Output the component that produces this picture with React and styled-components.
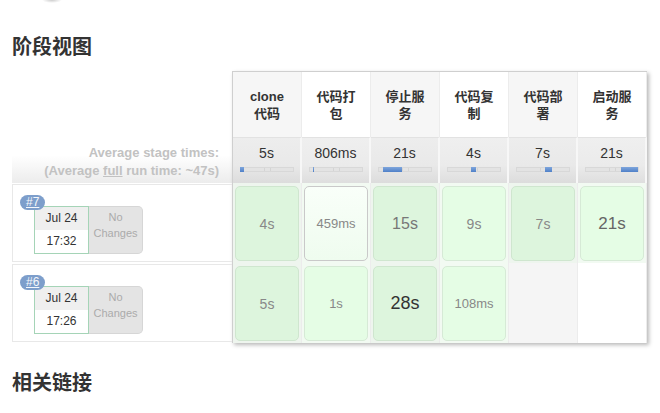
import React from 'react';
import styled, { createGlobalStyle } from 'styled-components';

const GlobalStyle = createGlobalStyle`
  html, body {
    margin: 0;
    background: #fff;
  }
  body {
    font-family: "Liberation Sans", Arial, "Noto Sans CJK SC", sans-serif;
    color: #333;
    overflow: hidden;
  }
`;

const Page = styled.div`
  padding: 0 12px;
`;

const TopShade = styled.div`
  width: 20px;
  height: 3px;
  margin-left: 30px;
  background: radial-gradient(ellipse at top, rgba(0, 0, 0, 0.2), rgba(0, 0, 0, 0) 70%);
`;

const Heading = styled.h2`
  margin: ${props => props.top}px 0 0;
  font-family: "Noto Sans CJK SC", sans-serif;
  font-size: 20px;
  line-height: 24px;
  font-weight: bold;
  color: #333;
`;

const StageView = styled.div`
  display: flex;
  margin-top: 13px;
`;

const LeftCol = styled.div`
  width: 220px;
  display: grid;
  grid-template-rows: 66px 46px 80px 80px;
`;

const LeftAvg = styled.div`
  margin-top: 3px;
  padding-right: 13px;
  background: linear-gradient(#fff, #fff 35%, #ececec);
  display: flex;
  flex-direction: column;
  justify-content: center;
  align-items: flex-end;
  font-size: 13px;
  line-height: 18px;
  font-weight: bold;
  color: #c2c2c2;
  u {
    text-decoration: underline;
  }
`;

const LeftRow = styled.div`
  position: relative;
  margin: 1px 0 1px;
  border: 1px solid #e8e8e8;
  border-right: none;
  padding: 21px 0 0 21px;
  display: flex;
  align-items: flex-start;
`;

const Badge = styled.a`
  position: absolute;
  left: 7px;
  top: 10px;
  height: 15px;
  padding: 0 6px;
  border-radius: 8px;
  background: #7d9ecb;
  color: #f4f7fb;
  font-size: 12px;
  line-height: 15px;
  text-decoration: underline;
  z-index: 1;
`;

const DateBox = styled.div`
  width: 53px;
  border: 1px solid #a5d4b7;
  display: flex;
  flex-direction: column;
  background: #fff;
`;

const DatePart = styled.div`
  height: 23px;
  line-height: 23px;
  text-align: center;
  font-size: 12px;
  color: #333;
  background: ${props => props.shaded ? '#efefef' : '#fff'};
`;

const NoChanges = styled.div`
  width: 53px;
  height: 44px;
  padding-top: 2px;
  border: 1px solid #d6d6d6;
  border-left: none;
  border-radius: 0 5px 5px 0;
  background: #e4e4e4;
  color: #ababab;
  font-size: 11px;
  line-height: 16px;
  text-align: center;
`;

const Table = styled.div`
  display: grid;
  grid-template-columns: repeat(6, 69px);
  grid-template-rows: 65px 46px 80px 80px;
  border-top: 1px solid #cfcfcf;
  border-left: 1px solid #cfcfcf;
  box-shadow: 2px 2px 4px rgba(0, 0, 0, 0.28);
  background: #fff;
`;

const HeadCell = styled.div`
  background: ${props => props.alt ? '#f6f6f6' : '#fff'};
  border-right: 1px solid #ececec;
  display: flex;
  flex-direction: column;
  align-items: center;
  justify-content: center;
  font-size: 13px;
  line-height: 17px;
  font-weight: bold;
  color: #333;
  padding-top: 1px;
`;

const AvgCell = styled.div`
  background: ${props => props.alt
    ? 'linear-gradient(#ededed, #e9e9e9 60%, #dcdcdc)'
    : 'linear-gradient(#efefef, #ebebeb 60%, #dedede)'};
  border-top: 1px solid #e2e2e2;
  border-right: 2px solid #f7f7f7;
  display: flex;
  flex-direction: column;
  align-items: center;
  padding-top: 7px;
`;

const AvgTime = styled.div`
  font-size: 14px;
  line-height: 16px;
  color: #333;
`;

const Bar = styled.div`
  position: relative;
  width: 54px;
  height: 5px;
  margin-top: 6px;
  background: linear-gradient(90deg, #e3e3e3 0, #e3e3e3 45%, #d4d4d4 45%, #d4d4d4 47%, #e3e3e3 47%, #e3e3e3 55%, #d4d4d4 55%, #d4d4d4 57%, #e3e3e3 57%);
  box-shadow: inset 0 0 0 1px #d8d8d8;
`;

const BarFill = styled.div`
  position: absolute;
  top: 0;
  bottom: 0;
  min-width: 1px;
  background: linear-gradient(#7fa6dc, #4f80c8);
`;

const BodyCell = styled.div`
  border-right: 1px solid #ececec;
  background: ${props => props.empty
    ? (props.alt ? '#f5f5f5' : '#fff')
    : (props.alt ? '#eef5ee' : '#f2faf2')};
  padding: 3px 2px 2px 2px;
  display: flex;
`;

const Box = styled.div`
  flex: 1;
  border-radius: 5px;
  border: 1px solid ${props => props.selected ? '#c9c9c9' : props.alt ? '#cfe6cf' : '#d6ead6'};
  background: ${props => props.selected
    ? 'linear-gradient(#f9fff9, #effcef)'
    : props.alt ? '#ddf5dd' : '#e5fde5'};
  display: flex;
  align-items: center;
  justify-content: center;
  font-size: ${props => props.size}px;
  color: ${props => props.tone};
`;

const stages = [
  { name: ['clone', '代码'], avg: '5s', fill: [0, 0.09] },
  { name: ['代码打', '包'], avg: '806ms', fill: [0.09, 0.02] },
  { name: ['停止服', '务'], avg: '21s', fill: [0.11, 0.35] },
  { name: ['代码复', '制'], avg: '4s', fill: [0.46, 0.08] },
  { name: ['代码部', '署'], avg: '7s', fill: [0.54, 0.13] },
  { name: ['启动服', '务'], avg: '21s', fill: [0.67, 0.33] },
];

const runs = [
  {
    id: '#7', date: 'Jul 24', time: '17:32',
    cells: [
      { text: '4s', size: 14, tone: '#888' },
      { text: '459ms', size: 13, tone: '#888', selected: true },
      { text: '15s', size: 16, tone: '#777' },
      { text: '9s', size: 14, tone: '#888' },
      { text: '7s', size: 14, tone: '#888' },
      { text: '21s', size: 17, tone: '#666' },
    ],
  },
  {
    id: '#6', date: 'Jul 24', time: '17:26',
    cells: [
      { text: '5s', size: 14, tone: '#888' },
      { text: '1s', size: 13, tone: '#888' },
      { text: '28s', size: 18, tone: '#333' },
      { text: '108ms', size: 13, tone: '#888' },
      null,
      null,
    ],
  },
];

const App = () => {
  return (
    <Page>
      <GlobalStyle />
      <TopShade />
      <Heading top={31}>阶段视图</Heading>
      <StageView>
        <LeftCol>
          <div />
          <LeftAvg>
            <span>Average stage times:</span>
            <span>(Average <u>full</u> run time: ~47s)</span>
          </LeftAvg>
          {runs.map(run => (
            <LeftRow key={run.id}>
              <Badge>{run.id}</Badge>
              <DateBox>
                <DatePart shaded>{run.date}</DatePart>
                <DatePart>{run.time}</DatePart>
              </DateBox>
              <NoChanges>No<br />Changes</NoChanges>
            </LeftRow>
          ))}
        </LeftCol>
        <Table>
          {stages.map((s, i) => (
            <HeadCell key={'h' + i} alt={i % 2 === 0}>
              {s.name.map(line => <span key={line}>{line}</span>)}
            </HeadCell>
          ))}
          {stages.map((s, i) => (
            <AvgCell key={'a' + i} alt={i % 2 === 0}>
              <AvgTime>{s.avg}</AvgTime>
              <Bar>
                <BarFill style={{ left: `${s.fill[0] * 100}%`, width: `${s.fill[1] * 100}%` }} />
              </Bar>
            </AvgCell>
          ))}
          {runs.map(run => run.cells.map((c, i) => (
            <BodyCell key={run.id + i} alt={i % 2 === 0} empty={!c}>
              {c && (
                <Box alt={i % 2 === 0} selected={c.selected} size={c.size} tone={c.tone}>
                  {c.text}
                </Box>
              )}
            </BodyCell>
          )))}
        </Table>
      </StageView>
      <Heading top={27}>相关链接</Heading>
    </Page>
  );
};

export default App;
